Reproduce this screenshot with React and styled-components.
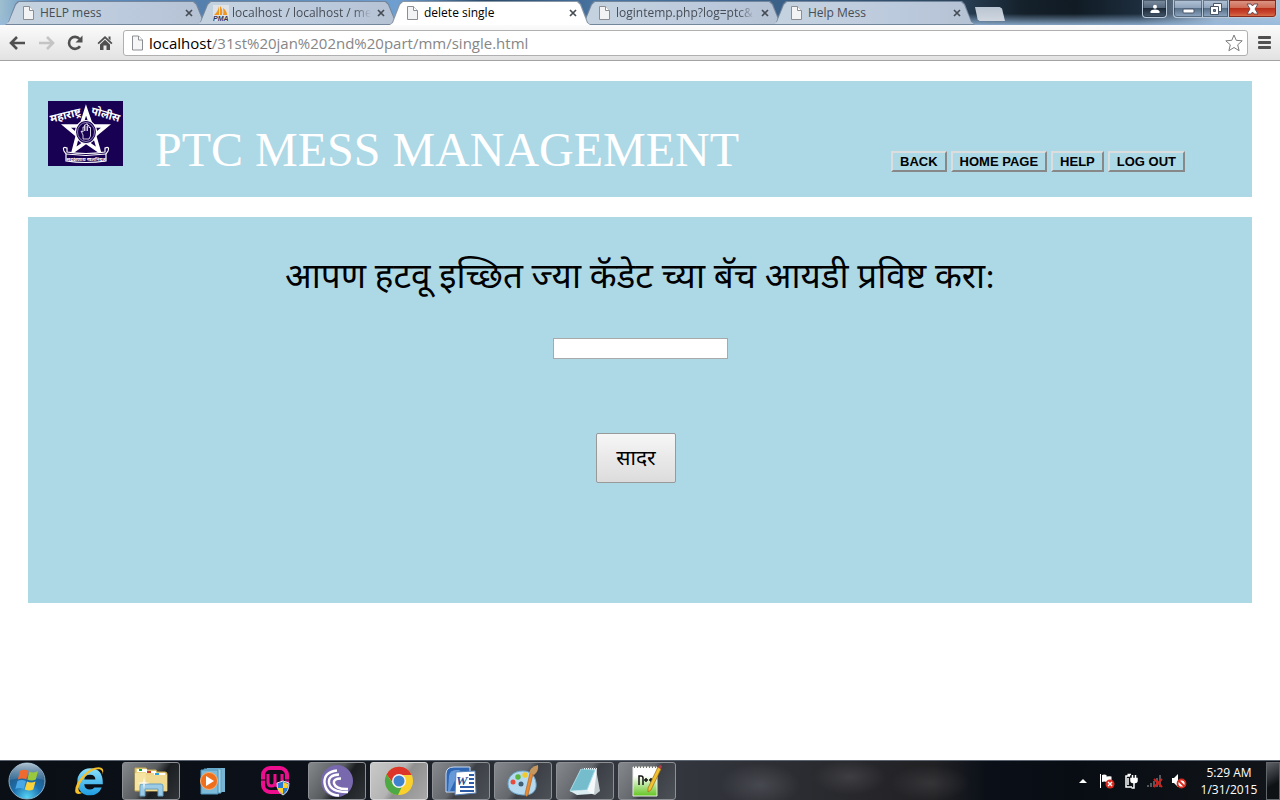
import React from "react";
import styled, { createGlobalStyle, css } from "styled-components";

const ui = `"Open Sans", "Noto Sans", sans-serif`;

const GlobalStyle = createGlobalStyle`
  * { box-sizing: border-box; }
  body { margin: 0; background: #fff; }
  button { font: inherit; padding: 0; border: 0; background: none; color: inherit; }
  svg { display: block; flex: none; }
`;

const Desktop = styled.div`
  display: flex;
  flex-direction: column;
  min-height: 100vh;
`;

/* ---------- window frame and tabs ---------- */

const TitleBar = styled.header`
  display: flex;
  align-items: flex-end;
  height: 25px;
  padding: 0 3px 0 5px;
  font-family: ${ui};
  background:
    linear-gradient(to bottom, transparent 55%, rgba(150, 185, 220, 0.85) 100%),
    linear-gradient(to right, #9ebfd0 0, #5e8fc2 3%, #5580ad 16%, #6f9fd0 31%, #2b4a68 38%, #4a76a4 47%, #3a5f86 62%, #2e475f 74%, #14202a 80%, #101b24 84%, #1d2d3d 89%, #9fb4cb 95%, #a9c4de 100%);
`;

const TabStrip = styled.nav`
  display: flex;
  align-items: flex-end;
  flex: 1;
  min-width: 0;
`;

const Tab = styled.div`
  position: relative;
  isolation: isolate;
  z-index: ${(p) => (p.$active ? 2 : 1)};
  display: flex;
  align-items: center;
  flex: 0 1 202px;
  min-width: 0;
  height: 24px;
  margin-right: -10px;
  padding: 0 13px 0 16px;
  color: ${(p) => (p.$active ? "#000" : "#474d55")};
  font-size: 12px;
  line-height: 16px;

  &::before,
  &::after {
    content: "";
    position: absolute;
    z-index: -1;
    inset: 0;
    clip-path: polygon(0 100%, 3px 90%, 10px 12%, 13px 0, calc(100% - 13px) 0, calc(100% - 10px) 12%, calc(100% - 3px) 90%, 100% 100%);
    background: ${(p) => (p.$active ? "#8996a6" : "#74869c")};
  }
  &::after {
    inset: ${(p) => (p.$active ? "1px 1px 0" : "1px")};
    background: ${(p) =>
      p.$active ? "#fff" : "linear-gradient(to right, #c5d3e0, #bccadd 60%, #b5c2d4)"};
  }
`;

const TabTitle = styled.a`
  flex: 1;
  min-width: 0;
  margin-left: 3px;
  overflow: hidden;
  white-space: nowrap;
  color: inherit;
  text-decoration: none;
  ${(p) =>
    p.$fade &&
    css`
      mask-image: linear-gradient(to right, #000 88%, transparent);
    `}
`;

const TabClose = styled.button`
  width: 10px;
  height: 16px;
  margin-left: 5px;
  display: grid;
  place-items: center;
  color: #454c54;
`;

const NewTab = styled.button`
  width: 30px;
  height: 14px;
  margin: 0 0 4px 10px;
  background: linear-gradient(#b9c5d2, #d0d7df);
  clip-path: polygon(0 0, 82% 0, 90% 10%, 100% 100%, 15% 100%, 9% 90%);
`;

const WindowControls = styled.div`
  display: flex;
  align-self: flex-start;
  gap: 6px;
`;

const ControlGroup = styled.div`
  display: flex;
`;

const ControlButton = styled.button`
  display: grid;
  place-items: center;
  width: ${(p) => p.$width}px;
  height: 18px;
  border: 1px solid #b9c8d8;
  border-top: 0;
  border-left-width: ${(p) => (p.$joined ? 0 : 1)}px;
  border-radius: ${(p) => p.$radius || "0"};
  box-shadow: inset 0 0 0 1px ${(p) => (p.$tone === "close" ? "#8a2a1c" : "rgba(20,35,50,.45)")};
  background: ${(p) =>
    p.$tone === "close"
      ? "linear-gradient(#dc9a89 0, #cf6c56 45%, #b8301a 50%, #c94630 75%, #dc7a4e 100%)"
      : p.$tone === "user"
        ? "linear-gradient(#7c8ea0 0, #56687b 45%, #1c2a38 50%, #46586c 100%)"
        : "linear-gradient(#b5c5d8 0, #8fa4bc 45%, #5a7089 50%, #8fa8c2 100%)"};
`;

/* ---------- toolbar ---------- */

const Toolbar = styled.div`
  display: flex;
  align-items: center;
  height: 36px;
  padding: 0 9px 0 3px;
  border-bottom: 1px solid #a3a3a3;
  background: linear-gradient(#fbfbfb, #e2e2e2);
`;

const ToolButton = styled.button`
  width: 29px;
  height: 26px;
  display: grid;
  place-items: center;
  color: ${(p) => (p.$muted ? "#c4c4c4" : "#505050")};
`;

const Omnibox = styled.div`
  display: flex;
  align-items: center;
  flex: 1;
  height: 26px;
  margin: 0 10px 0 4px;
  padding: 0 4px 0 6px;
  border: 1px solid #b0b0b0;
  border-radius: 3px;
  background: #fff;
`;

const Address = styled.a`
  flex: 1;
  margin-left: 5px;
  font: 15px/20px ${ui};
  color: #868686;
  text-decoration: none;
  white-space: nowrap;
  overflow: hidden;
  b { font-weight: 400; color: #000; }
`;

/* ---------- web page ---------- */

const Page = styled.main`
  flex: 1;
  display: flex;
  flex-direction: column;
  gap: 20px;
  padding: 20px 28px;
  background: #fff;
  font-family: "Liberation Serif", "Noto Sans Devanagari", "Noto Sans", serif;
`;

const Banner = styled.section`
  display: flex;
  align-items: flex-end;
  min-height: 116px;
  padding: 20px 67px 20px 20px;
  background: #add8e6;
`;

const Logo = styled.svg`
  flex: none;
  align-self: flex-start;
  width: 75px;
  height: 65px;
`;

const SiteTitle = styled.h1`
  flex: 1;
  margin: 0 0 0 32px;
  font-weight: 400;
  font-size: 48px;
  line-height: 54px;
  color: #fff;
  white-space: nowrap;
`;

const Menu = styled.nav`
  display: flex;
  gap: 4px;
  margin-bottom: 5px;
`;

const MenuButton = styled.button`
  height: 21px;
  padding: 0 7px;
  border: 2px solid;
  border-color: #ddd #888 #888 #ddd;
  font: bold 13px/16px "Liberation Sans", Arial, sans-serif;
  color: #000;
  white-space: nowrap;
`;

const Form = styled.form`
  display: flex;
  flex-direction: column;
  align-items: center;
  min-height: 386px;
  padding: 32px 20px 120px;
  background: #add8e6;
`;

const FieldLabel = styled.label`
  font-size: 35px;
  line-height: 56px;
  color: #000;
  text-align: center;
`;

const Field = styled.input`
  width: 175px;
  height: 21px;
  margin-top: 33px;
  padding: 1px 2px;
  border: 1px solid #a9a9a9;
  background: #fff;
`;

const Submit = styled.button`
  width: 80px;
  height: 50px;
  margin: 74px 8px 0 0;
  border: 1px solid #999;
  border-radius: 2px;
  background: linear-gradient(#f6f6f6, #dcdcdc);
  font-size: 21px;
  line-height: 28px;
  color: #000;
`;

/* ---------- taskbar ---------- */

const Taskbar = styled.footer`
  display: flex;
  align-items: center;
  height: 40px;
  border-top: 1px solid #5d6670;
  font-family: ${ui};
  color: #fff;
  background:
    radial-gradient(ellipse 40px 22px at 760px 24px, rgba(96, 98, 106, 0.5), transparent),
    radial-gradient(ellipse 36px 18px at 850px 16px, rgba(84, 84, 88, 0.5), transparent),
    radial-gradient(ellipse 40px 18px at 930px 22px, rgba(72, 70, 74, 0.5), transparent),
    linear-gradient(to right, #0a0f16 0, #0c1119 24%, #2b2f36 40%, #34373f 52%, #2c2d32 62%, #212124 73%, #0b1018 77%, #080d14 84%, #111519 100%);
`;

const StartButton = styled.button`
  width: 60px;
  height: 39px;
  padding-left: 7px;
`;

const TaskList = styled.div`
  display: flex;
  gap: 4px;
  flex: 1;
`;

const TaskButton = styled.button`
  display: grid;
  place-items: center;
  width: 58px;
  height: 38px;
  border-radius: 3px;
  ${(p) =>
    p.$state &&
    css`
      border: 1px solid ${p.$state === "focus" ? "#d5d5d5" : "#8d9196"};
      background: ${p.$state === "focus"
        ? "linear-gradient(125deg, #c9c9c9, #b4b4b4 45%, #8f8f8f 55%, #a9a9a9)"
        : p.$state === "dark"
          ? "linear-gradient(125deg, #85898c, #585b5e 45%, #1b1e21 60%, #303337)"
          : "linear-gradient(125deg, #85888c, #64676c 45%, #3c4046 55%, #4c5057)"};
    `}
`;

const Tray = styled.div`
  display: flex;
  align-items: center;
  gap: 8px;
  margin-right: 7px;

  & > :first-child { margin-right: 4px; }
`;

const Clock = styled.time`
  width: 70px;
  margin-right: 2px;
  text-align: center;
  font-size: 12px;
  line-height: 17px;
`;

const ShowDesktop = styled.button`
  width: 14px;
  height: 38px;
  border: 1px solid #60666c;
  background: linear-gradient(150deg, #5d6165, #2a2e32 40%, #0e1215 60%);
`;

/* ---------- drawings ---------- */

const FileIcon = ({ large }) =>
  large ? (
    <svg width="14" height="16" viewBox="0 0 14 16" fill="#f6f6f6" stroke="#8b8f94">
      <path d="M2.500 1h6l4 4v10h-10z" />
      <path d="M8.500 1v4h4" fill="#fff" />
    </svg>
  ) : (
    <svg width="16" height="16" viewBox="0 0 16 16" fill="#f2f3f5" stroke="#8b8f94">
      <path d="M2.500 1.500h6l4 4v9h-10z" />
      <path d="M8.500 1.500v4h4" fill="#fff" />
    </svg>
  );

const PmaIcon = () => (
  <svg width="16" height="16" viewBox="0 0 16 16">
    <rect width="16" height="16" fill="#dfe3e8" />
    <path d="M6 1v9H1q4-3 5-9zM7 1q3 3 2 9H7zM10 3q4 3 4 7h-4q1-3 0-7z" fill="#f0951d" />
    <text x="0" y="16" fontFamily="Liberation Sans" fontSize="7" fontWeight="bold" fontStyle="italic" fill="#32365f">PMA</text>
  </svg>
);

const CloseIcon = () => (
  <svg width="8" height="8" viewBox="0 0 8 8" stroke="currentColor" strokeWidth="1.7">
    <path d="M1 1l6 6M7 1L1 7" />
  </svg>
);

const BackIcon = ({ flip }) => (
  <svg width="17" height="14" viewBox="0 0 17 14" fill="none" stroke="currentColor" strokeWidth="2.6" transform={flip ? "scale(-1 1)" : undefined}>
    <path d="M16 7H3M8 1L2 7l6 6" />
  </svg>
);

const ReloadIcon = () => (
  <svg width="17" height="16" viewBox="0 0 17 16">
    <path d="M13 11.2A6 6 0 1 1 12.6 4" fill="none" stroke="currentColor" strokeWidth="2.6" />
    <path d="M15.500 0.500v7h-7z" fill="currentColor" />
  </svg>
);

const HomeIcon = () => (
  <svg width="16" height="16" viewBox="0 0 16 16" fill="currentColor">
    <path d="M8 1l7.500 7-1.200 1.300L8 3.500 1.700 9.300.5 8zM11.500 1.500h2v4l-2-2zM3 9.400l5-4.600 5 4.600V15H9.500v-4.500h-3V15H3z" />
  </svg>
);

const StarIcon = () => (
  <svg width="18" height="18" viewBox="0 0 18 18" fill="#fff" stroke="#7c7c7c" strokeLinejoin="round">
    <path d="M9 1l2.200 5.300 6 .5-4.500 4 1.400 5.900L9 13.500l-5.100 3.200 1.400-5.900-4.500-4 6-.5z" />
  </svg>
);

const MenuIcon = () => (
  <svg width="13" height="13" viewBox="0 0 13 13" fill="#505050">
    <rect width="13" height="3" rx="1" />
    <rect y="5" width="13" height="3" rx="1" />
    <rect y="10" width="13" height="3" rx="1" />
  </svg>
);

const UserIcon = () => (
  <svg width="10" height="10" viewBox="0 0 10 10" fill="#fff">
    <circle cx="5" cy="2.700" r="2" />
    <path d="M.5 9V7.500Q1 5.500 5 5.500t4.500 2V9z" />
  </svg>
);
const MinimizeIcon = () => (
  <svg width="13" height="10" viewBox="0 0 13 10"><rect x="1" y="5" width="11" height="4" rx="1" fill="#fff" stroke="#4a5668" /></svg>
);
const RestoreIcon = () => (
  <svg width="12" height="12" viewBox="0 0 12 12" fill="#fff" stroke="#4a5668">
    <path d="M3.500.5h8v8h-8z" />
    <path d="M.5 3.500h8v8h-8z" />
    <path d="M3.500 6.500h2v2h-2z" fill="#6c829b" />
  </svg>
);
const WindowCloseIcon = () => (
  <svg width="13" height="12" viewBox="0 0 13 12" fill="#fff" stroke="#5c4550" strokeWidth=".9">
    <path d="M1 1h4l1.500 2L8 1h4L9 6l3 5H8L6.500 9 5 11H1l3-5z" />
  </svg>
);

const PoliceLogo = () => (
  <Logo viewBox="0 0 75 65" role="img" aria-label="महाराष्ट्र पोलीस">
    <rect width="75" height="65" fill="#180052" />
    <path d="M38 9l5.500 16H58L46.500 34.500 51 50 38 41 25.500 50 29.500 34.500 18 25h15z" fill="none" stroke="#fff" strokeWidth="3.600" />
    <ellipse cx="38" cy="31" rx="10.500" ry="11.500" fill="#180052" stroke="#fff" strokeWidth="1.200" />
    <ellipse cx="38" cy="31" rx="8.500" ry="9.500" fill="none" stroke="#aaa3c8" strokeWidth=".8" />
    <path d="M35 38v-4l-2-4 2 1v-5h1.500v-2H38v-1h1.500v1.500H41v2h1.500V35l-1.500 3zM36.500 26v4M38 25v5M39.500 25v5" fill="none" stroke="#fff" strokeWidth=".8" />
    <g fill="#fff" fontFamily="Noto Sans Devanagari, Noto Sans, sans-serif" fontWeight="bold" textAnchor="middle">
      <text x="18" y="18" fontSize="11" transform="rotate(-14 18 17)">महाराष्ट्र</text>
      <text x="57" y="17" fontSize="11" transform="rotate(16 57 16)">पोलीस</text>
    </g>
    <path d="M19 47q-5-2-3 3l2 3v7q20 3 40 0v-7l2-3q2-5-3-3v4q-19 3-38 0z" fill="#180052" stroke="#fff" strokeWidth="1.200" />
    <path d="M18 53q20 3 40 0" fill="none" stroke="#fff" />
    <text x="38" y="60" fontSize="5" textAnchor="middle" fill="#fff" fontFamily="Noto Sans Devanagari, Noto Sans, sans-serif" fontWeight="bold">सद्रक्षणाय खलनिग्रह</text>
  </Logo>
);

const StartIcon = () => (
  <svg width="40" height="38" viewBox="0 0 40 38">
    <defs>
      <radialGradient id="orb" cx=".5" cy=".95" r=".9">
        <stop offset="0" stopColor="#55d4f5" />
        <stop offset=".45" stopColor="#1c6fae" />
        <stop offset="1" stopColor="#274b6c" />
      </radialGradient>
      <linearGradient id="gloss" x2="0" y2="1"><stop stopColor="#c9d9e3" stopOpacity=".85" /><stop offset="1" stopColor="#91b4cb" stopOpacity=".2" /></linearGradient>
    </defs>
    <circle cx="20" cy="19" r="18" fill="url(#orb)" stroke="#8eb2c8" />
    <path d="M3 18a17 17 0 0 1 34 0q-17-5-34 0z" fill="url(#gloss)" />
    <path d="M13 9q4-2.500 8.500 0l-2.200 8.500q-4-2.200-8.500 0z" fill="#ee6a30" />
    <path d="M22.500 9.500q4 2.200 8.500-.5l-2.200 8.500q-4 2.200-8.500 0z" fill="#99c83c" />
    <path d="M10.500 19q4-2.200 8.500 0l-2.200 8q-4-2.200-8.500 0z" fill="#4ba8e6" />
    <path d="M20 19.500q4 2.200 8.500 0l-2.200 8q-4 2.200-8.500 0z" fill="#fad23c" />
  </svg>
);

const IeIcon = () => (
  <svg width="34" height="34" viewBox="0 0 32 32">
    <defs><linearGradient id="ie" x2="0" y2="1"><stop stopColor="#8be0fb" /><stop offset="1" stopColor="#1e9ce2" /></linearGradient></defs>
    <path d="M17 4a12 12.500 0 0 0-12 13A11.500 12 0 0 0 17 29.500q8 0 11-7.500h-7q-1 2-4 2-5 0-5.500-5H29Q29.500 4 17 4zm-5.500 10.500q.5-4.500 5.500-4.500t5 4.500z" fill="url(#ie)" fillRule="evenodd" />
    <path d="M29 10q2-7-4-7-7 0-14 7-8 8-8 15 0 5 7 2-4 0-4-4 1-6 8-13 7-6 12-5 3 1 3 5z" fill="#f5c02a" />
  </svg>
);

const ExplorerIcon = () => (
  <svg width="34" height="32" viewBox="0 0 34 32">
    <path d="M1 3h11l1 2h9l1 2h8q2 0 2 2v17H1z" fill="#edd586" stroke="#c9a851" />
    <path d="M3 4h10v3H3z" fill="#fff" /><path d="M5 4h3v2H5z" fill="#16a436" />
    <path d="M12 6h10v2H12z" fill="#fff" /><path d="M13 6h4v2h-4z" fill="#c93d2c" />
    <path d="M20 8h11v2H20z" fill="#fff" /><path d="M21 8h4v2h-4z" fill="#29a5e0" />
    <path d="M1 8h11v17H1z" fill="#f5e4a1" /><path d="M12 10h21v16H12z" fill="#f0da91" />
    <path d="M6 21q0-2 2-2h19q2 0 2 2v10h-5v-7H11v7H6z" fill="#9ccbe6" stroke="#679fbf" />
    <path d="M10 12l1 5 5 1-5 1-1 6-1-6-6-1 6-1z" fill="#fff" opacity=".75" />
  </svg>
);

const MediaIcon = () => (
  <svg width="28" height="28" viewBox="0 0 28 28">
    <path d="M8 1h18v24H8z" fill="#77b3d3" /><path d="M5 2h17v24H5z" fill="#a4d4ea" stroke="#5ba0c5" />
    <path d="M2 3h17v24H2z" fill="#7dbbdb" stroke="#4d91b8" />
    <circle cx="10" cy="14" r="8.500" fill="#ee6f1c" stroke="#f8b176" /><path d="M7 9l8 5-8 5z" fill="#fff" />
  </svg>
);

const WampIcon = () => (
  <svg width="30" height="30" viewBox="0 0 30 30">
    <rect x="3" y="2" width="24" height="24" rx="7" fill="none" stroke="#ed0e8d" strokeWidth="4" />
    <path d="M8 8v8q0 4 3.500 4t3.500-4V8v8q0 4 3.500 4t3.500-4V8" fill="none" stroke="#ed0e8d" strokeWidth="3" />
    <path d="M0 14h6M24 14h6" stroke="#0d1119" />
    <path d="M17 17l6-2 6 2q0 9-6 12-6-3-6-12z" fill="#2878cf" stroke="#ddd" />
    <path d="M23 16l5 2q0 2-.5 4H23zM17.500 22H23v6q-4-2-5.500-6z" fill="#ffd027" />
  </svg>
);

const TorrentIcon = () => (
  <svg width="34" height="34" viewBox="0 0 34 34">
    <circle cx="17" cy="17" r="16" fill="#7868ae" />
    <g fill="none" stroke="#fff" strokeWidth="2.400">
      <path d="M17 6.500Q4 8 4.500 18.500 6 31 19 31.500" />
      <path d="M19 10.500Q8 11 9 19q2 9.500 19 9" />
      <path d="M21 14.500q-8 0-7 5 2 6 14 5.500" />
    </g>
  </svg>
);

const ChromeIcon = () => (
  <svg width="30" height="30" viewBox="0 0 30 30">
    <circle cx="15" cy="15" r="14" fill="#fad12c" />
    <path d="M2.500 8.500A14 14 0 0 1 27.800 9H15a6 6 0 0 0-5.500 8.500z" fill="#dd3529" />
    <path d="M2.500 8.500L9.700 18.500A6 6 0 0 0 18 20.500L14 29A14 14 0 0 1 2.500 8.500z" fill="#4ca944" />
    <circle cx="15" cy="15" r="7" fill="#f4f4f4" /><circle cx="15" cy="15" r="5.500" fill="#3f83cf" />
  </svg>
);

const WordIcon = () => (
  <svg width="32" height="30" viewBox="0 0 32 30">
    <path d="M1 8q0-7 8-7h16v25H1z" fill="#2f66b4" stroke="#c9daf0" />
    <path d="M4 10q1-6 7-6h4L5 25H3z" fill="#6699d8" />
    <path d="M11 6l19-1 1 22-21 2z" fill="#fff" stroke="#5884bd" />
    <text x="11" y="19" fontFamily="Liberation Serif" fontSize="13" fontWeight="bold" fontStyle="italic" fill="#234f98">W</text>
    <path d="M24 9h5M24 13h5M24 17h5M15 21h14M15 25h14" stroke="#2d5ba5" strokeWidth="1.800" />
  </svg>
);

const PaintIcon = () => (
  <svg width="34" height="34" viewBox="0 0 34 34">
    <path d="M17 7C7 7 2 13 2 20c0 9 10 11 17 11 8 0 12-5 11-12-1-8-6-12-13-12z" fill="#b5d9ee" stroke="#6ea6ca" />
    <circle cx="7" cy="18" r="2.500" fill="#e64b3c" /><circle cx="12" cy="13" r="2.700" fill="#59b53e" /><circle cx="19" cy="11" r="2.700" fill="#f3ca2e" />
    <circle cx="15" cy="20" r="2.500" fill="#416074" />
    <path d="M27 10l-5 21q-2 3-3-1L24 9z" fill="#e88b32" stroke="#a65b1d" strokeWidth=".6" />
    <path d="M23 9q1-6 9-8 1 6-4 10z" fill="#c5965d" />
  </svg>
);

const NotepadIcon = () => (
  <svg width="32" height="32" viewBox="0 0 32 32">
    <path d="M27 4l4 22-5 4-6-2z" fill="#c3ccd0" /><path d="M14 3h14l-3 26-12-1z" fill="#f4f8fa" />
    <path d="M12 4l14 1-8 20-17 1z" fill="#75bccd" stroke="#a8dde8" /><path d="M1 26l17-1 4 4-14 1z" fill="#dceef2" />
    <path d="M12 3h15" stroke="#777" strokeWidth="2.500" strokeDasharray="1 1" />
  </svg>
);

const NppIcon = () => (
  <svg width="32" height="34" viewBox="0 0 32 34">
    <defs><linearGradient id="npp" x2="0" y2="1"><stop offset=".3" stopColor="#fff" /><stop offset="1" stopColor="#63c51f" /></linearGradient></defs>
    <path d="M2 3h24v29H2z" fill="url(#npp)" stroke="#e9eee6" />
    <path d="M3 3h22" stroke="#777" strokeWidth="2" strokeDasharray="1 2" />
    <path d="M8 21V12h2q2 0 2 2v7M13 16h4M15 14v4M18 16h4M20 14v4" fill="none" stroke="#151515" strokeWidth="1.500" />
    <path d="M27 3l3 2-10 21-3 2v-4z" fill="#f2c12f" stroke="#9b6d17" strokeWidth=".7" /><path d="M27 3l2-2 2 1-1 3z" fill="#b23b4c" />
  </svg>
);

const CaretIcon = () => <svg width="8" height="16" viewBox="0 0 8 16"><path d="M0 10l4-4 4 4z" fill="#fff" /></svg>;
const FlagIcon = () => (
  <svg width="16" height="16" viewBox="0 0 16 16">
    <path d="M1.500 1v14" stroke="#fff" /><path d="M3 2q2-1 4.500 0v1.500q3-.5 5 0V9q-3 1-5 0T3 9z" fill="#fff" />
    <circle cx="11" cy="11" r="4.500" fill="#d92a20" /><path d="M9 9l4 4M13 9l-4 4" stroke="#fff" strokeWidth="1.400" />
  </svg>
);
const PlugIcon = () => (
  <svg width="16" height="16" viewBox="0 0 16 16" fill="none" stroke="#fff" strokeWidth="1.500">
    <path d="M7 3H3v11h6M4.500 1.500H8" /><path d="M8 5.500h6v2q0 2-2 2h-2q-2 0-2-2z" fill="#fff" /><path d="M9.500 2v3M12.500 2v3M11 10v5H8.500M5 5v7" />
  </svg>
);
const SignalIcon = () => (
  <svg width="16" height="16" viewBox="0 0 16 16">
    <path d="M1 14v-2M4 14v-4M7 14V8M10 14V5M13 14V2" stroke="#54585c" strokeWidth="2" />
    <path d="M7 6l8 8M15 6l-8 8" stroke="#cf201b" strokeWidth="2" />
  </svg>
);
const VolumeIcon = () => (
  <svg width="16" height="16" viewBox="0 0 16 16">
    <path d="M1 5h2l4-4v13l-4-4H1z" fill="#fff" /><circle cx="10.500" cy="10.500" r="4" fill="#fff" stroke="#d92a20" strokeWidth="1.800" />
    <path d="M8 8l5 5" stroke="#d92a20" strokeWidth="1.800" />
  </svg>
);

/* ---------- data ---------- */

const tabs = [
  { title: "HELP mess" },
  { title: "localhost / localhost / mes", pma: true, fade: true },
  { title: "delete single", active: true },
  { title: "logintemp.php?log=ptc&", fade: true },
  { title: "Help Mess" },
];

const tasks = [
  { name: "Internet Explorer", Icon: IeIcon },
  { name: "Windows Explorer", Icon: ExplorerIcon, state: "dark" },
  { name: "Windows Media Player", Icon: MediaIcon },
  { name: "WampServer", Icon: WampIcon },
  { name: "BitTorrent", Icon: TorrentIcon, state: "dark" },
  { name: "Google Chrome", Icon: ChromeIcon, state: "focus" },
  { name: "Microsoft Word", Icon: WordIcon, state: "open" },
  { name: "Paint", Icon: PaintIcon, state: "open" },
  { name: "Notepad", Icon: NotepadIcon, state: "open" },
  { name: "Notepad++", Icon: NppIcon, state: "open" },
];

const menu = ["BACK", "HOME PAGE", "HELP", "LOG OUT"];

export default function App() {
  return (
    <Desktop>
      <GlobalStyle />
      <TitleBar>
        <TabStrip aria-label="Tabs">
          {tabs.map((t) => (
            <Tab key={t.title} $active={t.active}>
              {t.pma ? <PmaIcon /> : <FileIcon />}
              <TabTitle href="#" $fade={t.fade}>{t.title}</TabTitle>
              <TabClose aria-label="Close tab"><CloseIcon /></TabClose>
            </Tab>
          ))}
          <NewTab aria-label="New tab" />
        </TabStrip>
        <WindowControls>
          <ControlButton $width={25} $tone="user" $radius="0 0 4px 4px" aria-label="User"><UserIcon /></ControlButton>
          <ControlGroup>
            <ControlButton $width={30} $radius="0 0 0 4px" aria-label="Minimize"><MinimizeIcon /></ControlButton>
            <ControlButton $width={26} $joined aria-label="Restore"><RestoreIcon /></ControlButton>
            <ControlButton $width={48} $joined $tone="close" $radius="0 0 4px 0" aria-label="Close"><WindowCloseIcon /></ControlButton>
          </ControlGroup>
        </WindowControls>
      </TitleBar>
      <Toolbar>
        <ToolButton aria-label="Back"><BackIcon /></ToolButton>
        <ToolButton $muted aria-label="Forward"><BackIcon flip /></ToolButton>
        <ToolButton aria-label="Reload"><ReloadIcon /></ToolButton>
        <ToolButton aria-label="Home"><HomeIcon /></ToolButton>
        <Omnibox>
          <FileIcon large />
          <Address href="#"><b>localhost</b>/31st%20jan%202nd%20part/mm/single.html</Address>
          <StarIcon />
        </Omnibox>
        <button aria-label="Menu"><MenuIcon /></button>
      </Toolbar>

      <Page>
        <Banner>
          <PoliceLogo />
          <SiteTitle>PTC MESS MANAGEMENT</SiteTitle>
          <Menu>
            {menu.map((m) => <MenuButton key={m}>{m}</MenuButton>)}
          </Menu>
        </Banner>
        <Form onSubmit={(e) => e.preventDefault()}>
          <FieldLabel htmlFor="batch">आपण हटवू इच्छित ज्या कॅडेट च्या बॅच आयडी प्रविष्ट करा:</FieldLabel>
          <Field id="batch" type="text" />
          <Submit type="submit">सादर</Submit>
        </Form>
      </Page>

      <Taskbar>
        <StartButton aria-label="Start"><StartIcon /></StartButton>
        <TaskList>
          {tasks.map(({ name, Icon, state }) => (
            <TaskButton key={name} $state={state} aria-label={name}><Icon /></TaskButton>
          ))}
        </TaskList>
        <Tray>
          <CaretIcon /><FlagIcon /><PlugIcon /><SignalIcon /><VolumeIcon />
        </Tray>
        <Clock>5:29 AM<br />1/31/2015</Clock>
        <ShowDesktop aria-label="Show desktop" />
      </Taskbar>
    </Desktop>
  );
}
